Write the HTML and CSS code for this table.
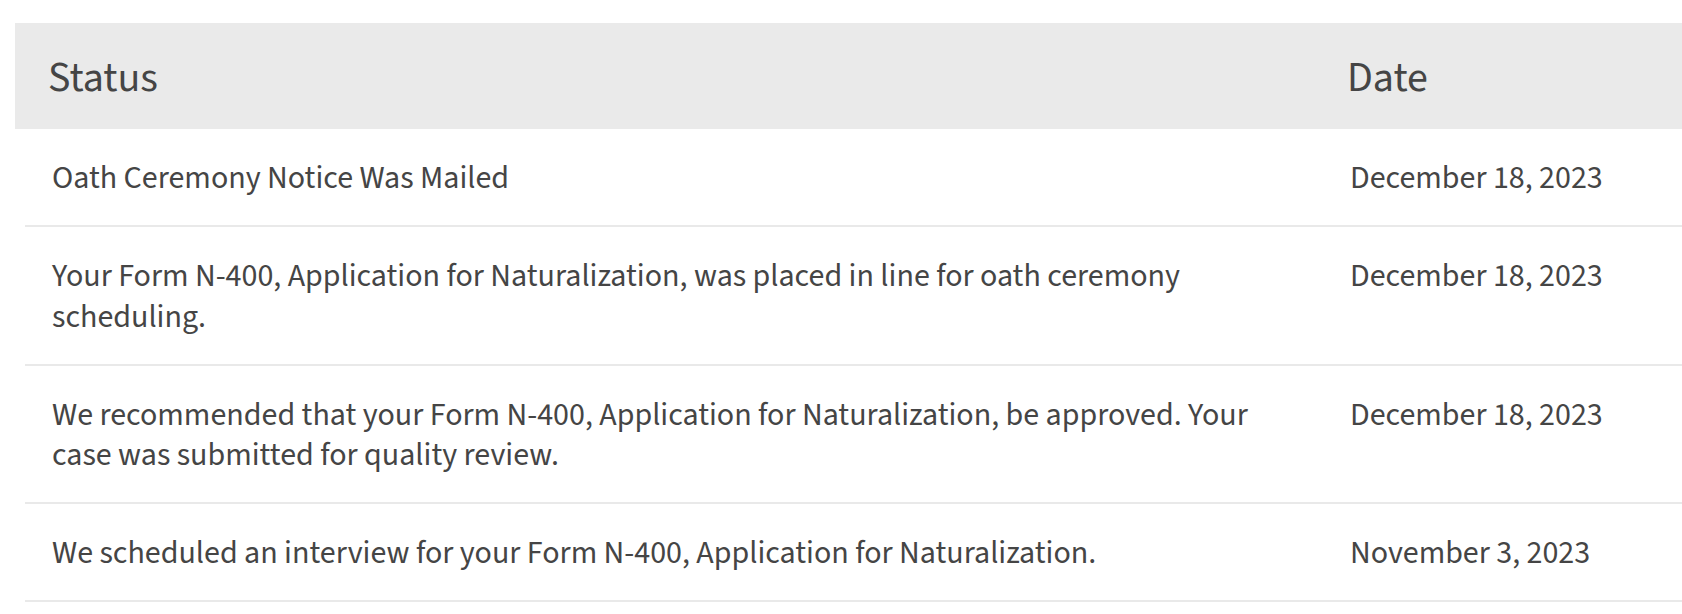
FILE: index.html
```html
<!DOCTYPE html>
<html lang="en">
<head>
<meta charset="utf-8">
<title>Case History</title>
<link rel="stylesheet" href="styles.css">
</head>
<body>
<div class="history">
  <div class="history-head">
    <div class="col-status">Status</div>
    <div class="col-date">Date</div>
  </div>
  <div class="history-row">
    <div class="col-status">Oath Ceremony Notice Was Mailed</div>
    <div class="col-date">December 18, 2023</div>
  </div>
  <div class="history-row">
    <div class="col-status">Your Form N-400, Application for Naturalization, was placed in line for oath ceremony scheduling.</div>
    <div class="col-date">December 18, 2023</div>
  </div>
  <div class="history-row">
    <div class="col-status">We recommended that your Form N-400, Application for Naturalization, be approved. Your case was submitted for quality review.</div>
    <div class="col-date">December 18, 2023</div>
  </div>
  <div class="history-row">
    <div class="col-status">We scheduled an interview for your Form N-400, Application for Naturalization.</div>
    <div class="col-date">November 3, 2023</div>
  </div>
</div>
</body>
</html>
```
FILE: styles.css
```css
html, body {
  margin: 0;
  padding: 0;
  background: #ffffff;
}

body {
  font-family: "Source Sans 3", "Liberation Sans", sans-serif;
  color: #454545;
  overflow: hidden;
}

.history {
  margin: 23px 0 0 15px;
  width: 1720px;
}

.history-head {
  display: grid;
  grid-template-columns: 1299px 1fr;
  align-items: center;
  height: 106px;
  padding: 4px 0 0 33px;
  box-sizing: border-box;
  background: #eaeaea;
  font-size: 42px;
  line-height: 50px;
}

.history-row {
  display: grid;
  grid-template-columns: 1298px 1fr;
  margin-left: 10px;
  padding: 29px 0 26.5px 27px;
  border-bottom: 2px solid #e9e9e9;
  font-size: 32px;
  line-height: 40.5px;
}

.history-row .col-status {
  padding-right: 60px;
}
```
